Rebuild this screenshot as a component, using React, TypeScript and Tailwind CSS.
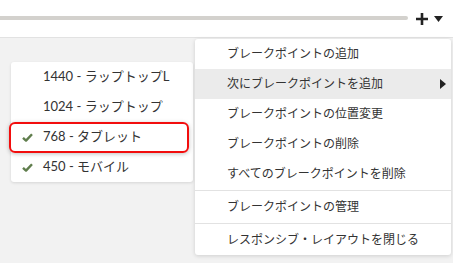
import { Fragment } from 'react';

const breakpoints = [
    { label: '1440 - ラップトップL', checked: false, active: false },
    { label: '1024 - ラップトップ', checked: false, active: false },
    { label: '768 - タブレット', checked: true, active: true },
    { label: '450 - モバイル', checked: true, active: false },
];

const actions = [
    { label: 'ブレークポイントの追加' },
    { label: '次にブレークポイントを追加', submenu: true },
    { label: 'ブレークポイントの位置変更' },
    { label: 'ブレークポイントの削除' },
    { label: 'すべてのブレークポイントを削除', divider: true },
    { label: 'ブレークポイントの管理', divider: true },
    { label: 'レスポンシブ・レイアウトを閉じる' },
];

const font = { fontFamily: 'Lato, "Noto Sans CJK JP", sans-serif' };

const Check = () => (
    <svg width="11" height="9" viewBox="0 0 11 9" className="shrink-0">
        <path d="M1 4.8 L4 7.6 L10 1.2" fill="none" stroke="#5f7d4c" strokeWidth={2.4} strokeLinejoin="round" />
    </svg>
);

export default function App() {
    return (
        <div className="w-[453px] h-[263px] bg-[#f2f2f2] flex flex-col overflow-hidden text-[#333]" style={font}>
            {/* toolbar */}
            <div className="h-[38px] bg-white border-b border-[#e2e2e2] flex items-center shrink-0">
                <div className="flex-1 h-[4px] mt-[-1px] bg-[#d3d1cd] rounded-r-full" />
                <div className="flex items-center ml-[8px] mr-[10px] gap-[6px]">
                    <svg width="12" height="12" viewBox="0 0 12 12">
                        <path d="M6 0 V12 M0 6 H12" stroke="#222" strokeWidth={2.6} />
                    </svg>
                    <svg width="9" height="6" viewBox="0 0 9 6">
                        <path d="M0 0 H9 L4.5 6 Z" fill="#222" />
                    </svg>
                </div>
            </div>

            <div className="flex items-start flex-1">
                {/* breakpoint list */}
                <div className="ml-[11px] mt-[24px] w-[182px] bg-white rounded-[3px] shadow-[0_1px_3px_rgba(0,0,0,0.12)] flex flex-col">
                    {breakpoints.map((bp) => (
                        <div key={bp.label} className="relative h-[30px] flex items-center text-[13px]">
                            <div className="w-[32px] flex justify-end pr-[10px]">{bp.checked && <Check />}</div>
                            <span className="whitespace-nowrap">{bp.label}</span>
                            {bp.active && (
                                <div className="absolute left-[-2px] right-[4px] top-0 bottom-[-1px] border-2 border-[#f20d0d] rounded-[6px] shadow-[0_1px_4px_rgba(0,0,0,0.25)]" />
                            )}
                        </div>
                    ))}
                </div>

                {/* actions menu */}
                <div className="ml-[2px] mt-px w-[256px] bg-white rounded-[3px] shadow-[0_1px_4px_rgba(0,0,0,0.15)] flex flex-col">
                    {actions.map((a) => (
                        <Fragment key={a.label}>
                            <div
                                className={`h-[30px] flex items-center pl-[32px] pr-[5px] text-[12px] whitespace-nowrap ${a.submenu ? 'bg-[#ebebeb]' : ''}`}
                            >
                                <span className="flex-1">{a.label}</span>
                                {a.submenu && (
                                    <svg width="6" height="10" viewBox="0 0 6 10">
                                        <path d="M0 0 L6 5 L0 10 Z" fill="#222" />
                                    </svg>
                                )}
                            </div>
                            {a.divider && <div className="h-px my-px bg-[#e2e2e2]" />}
                        </Fragment>
                    ))}
                </div>
            </div>
        </div>
    );
}
